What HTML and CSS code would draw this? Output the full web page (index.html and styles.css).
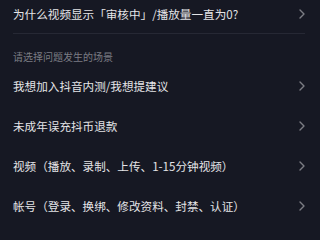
FILE: index.html
```html
<!DOCTYPE html>
<html lang="zh">
<head>
<meta charset="utf-8">
<link rel="stylesheet" href="styles.css">
</head>
<body>
<div class="page">
  <div class="row row-top">
    <span class="label">为什么视频显示「审核中」/播放量一直为0?</span>
    <svg class="chev" width="6" height="10" viewBox="0 0 6 10"><polyline points="1,1 5,5 1,9" fill="none" stroke="currentColor" stroke-width="1.4" stroke-linecap="round" stroke-linejoin="round"/></svg>
  </div>
  <div class="divider"></div>
  <div class="section">请选择问题发生的场景</div>
  <div class="row">
    <span class="label">我想加入抖音内测/我想提建议</span>
    <svg class="chev" width="6" height="10" viewBox="0 0 6 10"><polyline points="1,1 5,5 1,9" fill="none" stroke="currentColor" stroke-width="1.4" stroke-linecap="round" stroke-linejoin="round"/></svg>
  </div>
  <div class="row">
    <span class="label">未成年误充抖币退款</span>
    <svg class="chev" width="6" height="10" viewBox="0 0 6 10"><polyline points="1,1 5,5 1,9" fill="none" stroke="currentColor" stroke-width="1.4" stroke-linecap="round" stroke-linejoin="round"/></svg>
  </div>
  <div class="row">
    <span class="label">视频（播放、录制、上传、1-15分钟视频）</span>
    <svg class="chev" width="6" height="10" viewBox="0 0 6 10"><polyline points="1,1 5,5 1,9" fill="none" stroke="currentColor" stroke-width="1.4" stroke-linecap="round" stroke-linejoin="round"/></svg>
  </div>
  <div class="row">
    <span class="label">帐号（登录、换绑、修改资料、封禁、认证）</span>
    <svg class="chev" width="6" height="10" viewBox="0 0 6 10"><polyline points="1,1 5,5 1,9" fill="none" stroke="currentColor" stroke-width="1.4" stroke-linecap="round" stroke-linejoin="round"/></svg>
  </div>
</div>
</body>
</html>
```
FILE: styles.css
```css
html, body {
  margin: 0;
  padding: 0;
  background: #161823;
}
.page {
  width: 320px;
  height: 240px;
  overflow: hidden;
  font-family: "Noto Sans CJK SC", "Noto Sans", sans-serif;
}
.row {
  display: flex;
  align-items: center;
  justify-content: space-between;
  height: 40px;
  padding: 0 15px 0 13px;
}
.row-top {
  height: 28px;
}
.label {
  color: #e4e4e7;
  font-size: 11.6px;
  line-height: 16px;
}
.chev {
  color: #7c7d84;
  display: block;
}
.divider {
  height: 1px;
  background: #262834;
  margin: 5px 15px 0 13px;
}
.section {
  color: #7b7c83;
  font-size: 10px;
  line-height: 16px;
  padding: 15px 13px 1px;
}
```
